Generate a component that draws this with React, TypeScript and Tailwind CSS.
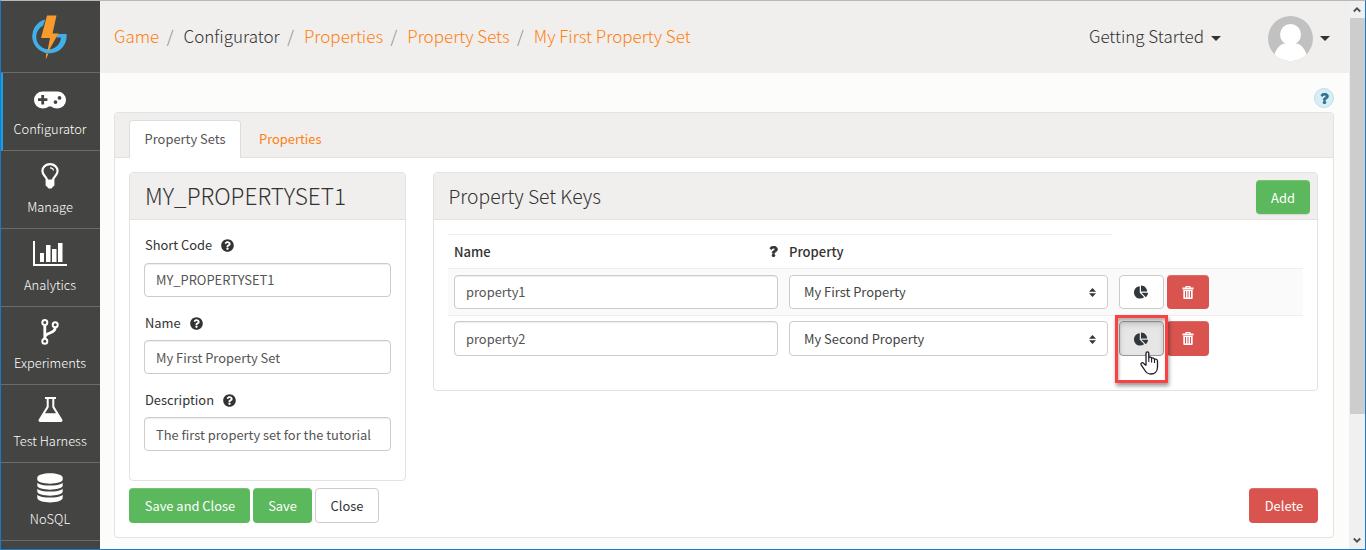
import React, { type ReactNode } from "react";
import { FaChartPie, FaQuestion, FaQuestionCircle } from "react-icons/fa";

function Logo() {
  return (
    <svg className="mr-[3px] h-[46px] w-[38px]" viewBox="0 0 38 46">
      <path d="M15.200 4.400A17.200 17.200 0 1 0 36.500 19H27.800L26.500 22.600H31A12.400 12.400 0 1 1 13 10.800Z" fill="#41b0e8" />
      <path d="M17 0.500H26.500L22.500 18.500H28.500L18.500 36H17.500L20 23H11Z" fill="#f89b2e" />
      <path d="M16 38.500H18.500L15.800 44.500Z" fill="#f89b2e" />
    </svg>
  );
}

function GamepadIcon() {
  return (
    <svg className="h-[18px] w-[32px]" viewBox="0 0 32 18">
      <path fillRule="evenodd" fill="#fff" d="M8.500 .5h15a8.500 8.500 0 0 1 0 17c-2.700 0-5-1-6.200-2h-2.600c-1.200 1-3.500 2-6.200 2a8.500 8.500 0 0 1 0-17zM7.300 4v3.300H4v2.800h3.300v3.300h2.800v-3.300h3.300V7.300h-3.300V4zM21.500 9.200a1.900 1.900 0 1 0 0 3.800a1.900 1.900 0 0 0 0-3.800zM25.500 5a1.900 1.900 0 1 0 0 3.800a1.900 1.900 0 0 0 0-3.800z" />
    </svg>
  );
}

function BulbIcon() {
  return (
    <svg className="mb-[4px] h-[26px] w-[18px]" viewBox="0 0 18 26" fill="none" stroke="#fff">
      <path strokeWidth="2.200" d="M6 17C5.800 13.500 1.400 12.500 1.400 8A7.600 6.900 0 0 1 16.600 8C16.600 12.500 12.200 13.500 12 17" />
      <path strokeWidth="1.200" d="M9 4.800c2 0 3.400 1.200 3.400 2.800" />
      <path fill="#fff" stroke="none" d="M4.600 16.500h8.800v6l-1.700 1.500l-1.200 1.500h-3l-1.200-1.500l-1.700-1.500z" />
    </svg>
  );
}

function BarsIcon() {
  return (
    <svg className="mb-[4px] h-[25px] w-[34px]" viewBox="0 0 34 25" fill="#fff">
      <path d="M0 0h2v23h32v2H0zM7 12h4v9H7zM13 4h4.500v17H13zM19 8h4.500v13H19zM25 2h4.500v19H25z" />
    </svg>
  );
}

function BranchIcon() {
  return (
    <svg className="mb-[4px] h-[26px] w-[18px]" viewBox="0 0 18 26" fill="none" stroke="#fff" strokeWidth="2">
      <circle cx="3.800" cy="3.600" r="2.500" />
      <circle cx="3.800" cy="22.200" r="2.500" />
      <circle cx="14.200" cy="5.800" r="2.500" />
      <path strokeWidth="2.800" d="M3.800 6.500V19.500M14.200 8.500C14.200 15.500 4.600 12.500 3.800 18.500" />
    </svg>
  );
}

function FlaskIcon() {
  return (
    <svg className="mb-[4px] h-[25px] w-[25px]" viewBox="0 0 25 25">
      <path fillRule="evenodd" fill="#fff" d="M7 0h11v2h-1.700v7.600l7.800 12.700c.9 1.500.2 2.700-1.500 2.700H2.400c-1.700 0-2.400-1.200-1.500-2.700L8.700 9.600V2H7zM10.700 2v8.200L7 16.200h11l-3.700-6V2z" />
    </svg>
  );
}

function DatabaseIcon() {
  return (
    <svg className="mb-[4px] h-[30px] w-[26px]" viewBox="0 0 26 30" fill="#fff">
      <path d="M.3 4.800C.3-1.200 25.700-1.200 25.700 4.800V6.500C25.700 12 .3 12 .3 6.500zM.3 9.700C4 13.500 22 13.500 25.700 9.700V12.500C25.700 18 .3 18 .3 12.500zM.3 15.700C4 19.500 22 19.500 25.700 15.700V18.500C25.700 24 .3 24 .3 18.500zM.3 21.700C4 25.500 22 25.500 25.700 21.700V24.500C25.700 31 .3 31 .3 24.500z" />
    </svg>
  );
}

function TrashIcon() {
  return (
    <svg className="h-[13px] w-[12px]" viewBox="0 0 12 13">
      <path fillRule="evenodd" fill="#fff" d="M3.500 0h5v1.500H11.500V3.500H.5V1.500H3.500zM4.700 1v.5h2.600V1zM1.300 4h9.400v8a1 1 0 0 1-1 1H2.300a1 1 0 0 1-1-1zM3 5v6.500h1V5zM5.500 5v6.500h1V5zM8 5v6.500h1V5z" />
    </svg>
  );
}

function SortIcon() {
  return (
    <svg className="h-[9px] w-[7px]" viewBox="0 0 7 9" fill="#32373b">
      <path d="M3.500 0L7 3.700H0zM3.500 9L0 5.300H7z" />
    </svg>
  );
}

function Caret() {
  return (
    <svg className="h-[5px] w-[10px]" viewBox="0 0 10 5" fill="#333">
      <path d="M0 0h10L5 5z" />
    </svg>
  );
}

function HandCursor() {
  return (
    <svg className="absolute left-[21px] top-[30px] h-[24px] w-[19px]" viewBox="0 0 19 24">
      <path
        fill="#fff"
        stroke="#1b1b25"
        strokeWidth="1.300"
        strokeLinejoin="round"
        d="M6 14.500V2.200C6 .3 8.800 .3 8.800 2.200V6.500C9.500 5.700 11.500 6 11.600 7.300C12.500 6.500 14.300 7 14.500 8.300C15.500 7.700 17.500 8.200 17.500 10V16C17.500 20.500 14.500 23 11 23C7.500 23 6.300 21.800 5 19.500L1.200 13.800C.3 12.200 2.200 11 3.500 12.200L6 14.500"
      />
      <path stroke="#1b1b25" strokeWidth="1.100" d="M8.800 6.500V11M11.600 7.300V11.500M14.500 8.300V12" />
    </svg>
  );
}

function NavItem({ icon, label, active }: { icon: ReactNode; label: string; active?: boolean }) {
  return (
    <div className={`flex h-[78px] shrink-0 flex-col items-center border-b border-[#6b6b69] text-white ${active ? "border-l-2 border-l-[#1ba1e2] pr-[2px]" : ""}`}>
      <div className="flex h-[45px] justify-center pr-px pt-[9px]">
        <div className="flex h-[35px] items-center">{icon}</div>
      </div>
      <div className="pr-px text-[12.9px] font-light leading-[22px]">{label}</div>
    </div>
  );
}

function Field({ label, value, first }: { label: string; value: string; first?: boolean }) {
  return (
    <div className={first ? "pt-[15px]" : "pt-4"}>
      <div className="flex h-5 items-center gap-[9px] pl-px text-[12.9px] text-[#333]">
        {label}
        <FaQuestionCircle className="h-[13px] w-[13px]" />
      </div>
      <div className={`flex h-[34px] items-center rounded border border-[#ccc] bg-white px-[11px] text-[12.9px] text-[#555] shadow-[inset_0_1px_1px_rgba(0,0,0,0.075)] ${first ? "mt-2" : "mt-[7px] pt-[2px]"}`}>{value}</div>
    </div>
  );
}

function PropertyRow({ name, property, active }: { name: string; property: string; active?: boolean }) {
  return (
    <div className={`flex h-[47px] border-t border-[#eee] pl-[6px] text-[12.9px] text-[#555] ${active ? "pt-[5px]" : "bg-[#fafafa] pt-[6px]"}`}>
      <div className={`flex w-[324px] items-center rounded border border-[#ccc] bg-white px-[11px] shadow-[inset_0_1px_1px_rgba(0,0,0,0.075)] ${active ? "h-[35px] pt-px" : "h-[34px]"}`}>{name}</div>
      <div className={`ml-[11px] flex w-[319px] items-center justify-between rounded border border-[#ccc] bg-white pl-[14px] pr-[11px] text-[#444] ${active ? "h-[35px] pt-px" : "h-[34px]"}`}>
        {property}
        <SortIcon />
      </div>
      <div className="relative ml-[11px]">
        <div className={`flex w-[45px] items-center justify-center rounded border pr-px text-[#32373b] ${active ? "h-[35px] border-[#999] bg-[#e6e6e6] shadow-[inset_0_3px_5px_rgba(0,0,0,0.125)]" : "h-[34px] border-[#ccc] bg-white"}`}>
          <FaChartPie className="h-[14px] w-[14px]" />
        </div>
        {active && (
          <>
            <div className="absolute -left-[4px] -top-[6px] z-10 h-[68px] w-[53px] border-[3px] border-[#fb4141] shadow-[1px_3px_4px_rgba(0,0,0,0.4),inset_1px_3px_3px_rgba(0,0,0,0.3)]" />
            <div className="absolute left-0 top-0 z-20">
              <HandCursor />
            </div>
          </>
        )}
      </div>
      <div className={`ml-[3px] flex w-[42px] items-center justify-center rounded bg-[#d9534f] shadow-[inset_0_1px_0_rgba(255,255,255,0.15)] ${active ? "h-[35px]" : "h-[34px]"}`}>
        <TrashIcon />
      </div>
    </div>
  );
}

const crumbs = ["Game", "Configurator", "Properties", "Property Sets", "My First Property Set"];

export default function App() {
  return (
    <div className="relative flex h-[550px] w-[1366px] overflow-hidden border border-t-[#b9b8b8] border-r-[#1979ca] border-b-[#1979ca] border-l-[#1979ca] bg-[#fcfcfa] font-['Noto_Sans_CJK_SC','Noto_Sans',sans-serif] text-[#333]">
      <nav className="flex w-[99px] shrink-0 flex-col overflow-hidden bg-[#444442]">
        <div className="flex h-[72px] shrink-0 justify-center border-b border-[#6b6b69] pt-[14px]">
          <Logo />
        </div>
        <NavItem active icon={<GamepadIcon />} label="Configurator" />
        <NavItem icon={<BulbIcon />} label="Manage" />
        <NavItem icon={<BarsIcon />} label="Analytics" />
        <NavItem icon={<BranchIcon />} label="Experiments" />
        <NavItem icon={<FlaskIcon />} label="Test Harness" />
        <NavItem icon={<DatabaseIcon />} label="NoSQL" />
      </nav>

      <main className="flex w-[1249px] shrink-0 flex-col">
        <header className="flex h-[72px] shrink-0 items-center bg-[#f0efee] pl-[14px] text-[17px] font-light">
          <div className="flex pb-[2px]">
            {crumbs.map((c, i) => (
              <div key={c} className="flex">
                {i > 0 && <span className="pl-[7.500px] pr-[10px] text-[#888]">/</span>}
                <span className={i === 1 ? "text-[#333]" : "text-[#ff7f0e]"}>{c}</span>
              </div>
            ))}
          </div>
          <div className="ml-auto flex items-center pr-[19px]">
            <span className="pb-[2px]">Getting Started</span>
            <span className="ml-[7px] mt-[2px]"><Caret /></span>
            <svg className="ml-[47px] mt-[2px] h-[45px] w-[45px]" viewBox="0 0 45 45">
              <circle cx="22.500" cy="22.500" r="22.500" fill="#c1c1c1" />
              <circle cx="22.500" cy="18.500" r="10.500" fill="#fff" />
              <path fill="#fff" d="M6.500 38.400C8.500 32 13 27.500 17 27.500H28C32 27.500 36.500 32 38.500 38.400A22.500 22.500 0 0 1 6.500 38.400z" />
            </svg>
            <span className="ml-[7px] mt-[2px]"><Caret /></span>
          </div>
        </header>

        <div className="flex h-[38px] shrink-0 justify-end pr-[15px] pt-[15px]">
          <div className="flex h-5 w-5 items-center justify-center rounded-full border border-[#bce0f1] bg-[#d9edf7] text-[#31708f]">
            <FaQuestion className="h-[11px] w-[11px]" stroke="currentColor" strokeWidth="30" />
          </div>
        </div>

        <section className="ml-[14px] mt-[1px] h-[426px] w-[1220px] shrink-0 rounded border border-[#e2e2e2] bg-white">
          <div className="flex h-[45px] items-end rounded-t border-b border-[#e2e2e2] bg-[#f0efee] pl-[14px] text-[12.9px]">
            <div className="-mb-px flex h-[38px] w-[112px] items-center justify-center rounded-t border border-b-0 border-[#ddd] bg-white pb-[2px] text-[#555]">Property Sets</div>
            <div className="flex h-[37px] items-center pl-[18px] text-[#ff7f0e]">Properties</div>
          </div>

          <div className="flex items-start pl-[14px] pt-[14px]">
            <div className="h-[309px] w-[277px] rounded border border-[#e2e2e2]">
              <div className="flex h-[47px] items-center border-b border-[#e2e2e2] bg-[#f0efee] pl-[15px] text-[22.600px] font-light">MY_PROPERTYSET1</div>
              <div className="px-[14px]">
                <Field first label="Short Code" value="MY_PROPERTYSET1" />
                <Field label="Name" value="My First Property Set" />
                <Field label="Description" value="The first property set for the tutorial" />
              </div>
            </div>

            <div className="ml-[27px] h-[219px] w-[885px] rounded border border-[#e2e2e2]">
              <div className="flex h-[47px] items-center justify-between border-b border-[#e2e2e2] bg-[#f0efee] pl-[14.500px] pr-[7px] text-[19.300px] font-light">
                <span className="pt-px">Property Set Keys</span>
                <div className="mt-[2px] flex h-[34px] w-[54px] items-center justify-center rounded bg-[#5cb85c] pt-px text-[12.9px] font-normal text-white shadow-[inset_0_1px_0_rgba(255,255,255,0.15),0_1px_1px_rgba(0,0,0,0.1)]">Add</div>
              </div>
              <div className="px-[14px] pt-[14px]">
                <div className="flex h-[34px] w-[664px] items-center border-t border-[#eee] pl-[6px] text-[13px] font-medium">
                  <span className="w-[315px]">Name</span>
                  <FaQuestion className="h-[11px] w-[9px]" stroke="currentColor" strokeWidth="30" />
                  <span className="ml-[11px]">Property</span>
                </div>
                <PropertyRow name="property1" property="My First Property" />
                <PropertyRow active name="property2" property="My Second Property" />
              </div>
            </div>
          </div>

          <div className="flex pl-[14px] pr-[15px] pt-[7px] text-[12.9px] text-white">
            <div className="flex h-[35px] w-[121px] items-center justify-center rounded bg-[#5cb85c] pl-px shadow-[inset_0_1px_0_rgba(255,255,255,0.15)]">Save and Close</div>
            <div className="ml-[3px] flex h-[35px] w-[59px] items-center justify-center rounded bg-[#5cb85c] shadow-[inset_0_1px_0_rgba(255,255,255,0.15)]">Save</div>
            <div className="ml-[3px] flex h-[35px] w-[64px] items-center justify-center rounded border border-[#ccc] bg-white text-[#333]">Close</div>
            <div className="ml-auto flex h-[35px] w-[69px] items-center justify-center rounded bg-[#d9534f] pl-px shadow-[inset_0_1px_0_rgba(255,255,255,0.15)]">Delete</div>
          </div>
        </section>
      </main>

      <aside className="flex w-[16px] shrink-0 flex-col items-center bg-[#f0f0f0]">
        <svg className="h-[17px] w-[8px] shrink-0" viewBox="0 0 8 17" fill="none" stroke="#505050" strokeWidth="1.800"><path d="M.8 10.500L4 7.300L7.200 10.500" /></svg>
        <div className="h-[396px] w-[15px] bg-[#cdcdcd]" />
        <svg className="mt-auto h-[17px] w-[8px] shrink-0" viewBox="0 0 8 17" fill="none" stroke="#505050" strokeWidth="1.800"><path d="M.8 6.500L4 9.700L7.200 6.500" /></svg>
      </aside>
    </div>
  );
}
